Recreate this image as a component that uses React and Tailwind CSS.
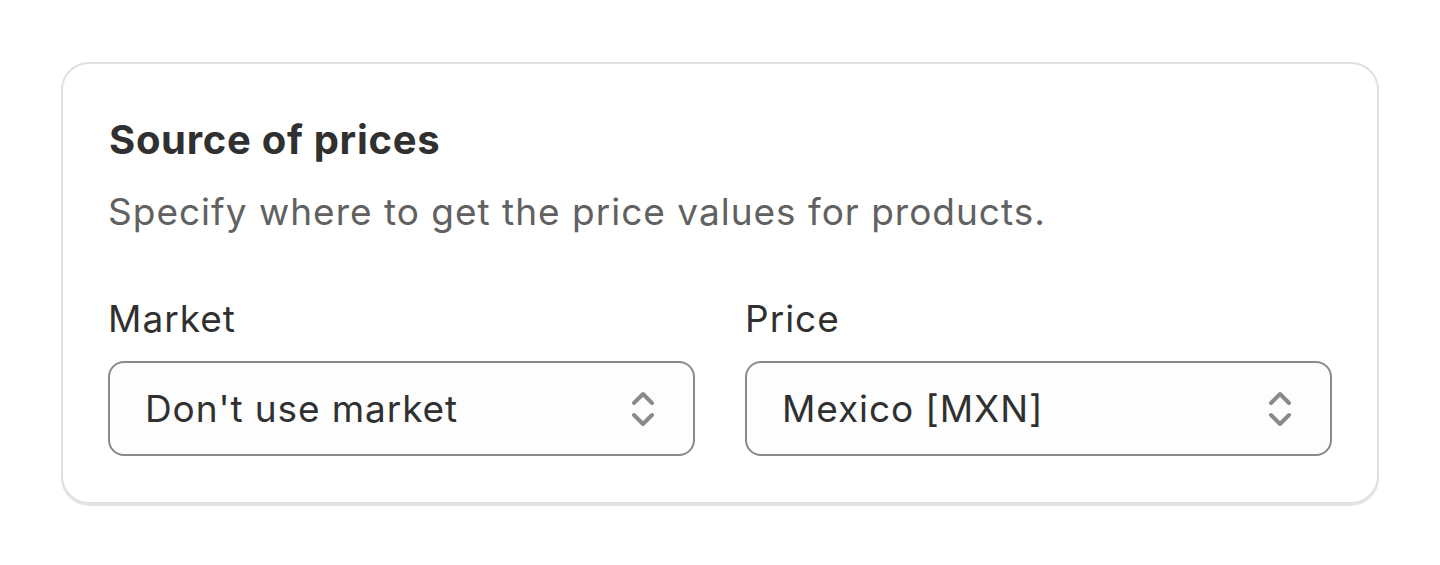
const SelectIcon = () => (
  <svg width="24" height="38" viewBox="0 0 24 38" fill="none" className="shrink-0">
    <path d="M3 13 L12 4 L21 13" stroke="#8a8a8a" strokeWidth="4" strokeLinecap="round" strokeLinejoin="round" />
    <path d="M3 25 L12 34 L21 25" stroke="#8a8a8a" strokeWidth="4" strokeLinecap="round" strokeLinejoin="round" />
  </svg>
)

function Select({ label, value }) {
  return (
    <div className="flex flex-col gap-[18px]">
      <label className="text-[37px] leading-[48px] tracking-[1px] text-[#303030]">{label}</label>
      <div className="flex h-[95px] items-center justify-between rounded-[16px] border-2 border-[#8a8a8a] bg-[#fdfdfd] pl-[35px] pr-[38px]">
        <span className="text-[37px] leading-[48px] tracking-[0.9px] text-[#303030]">{value}</span>
        <SelectIcon />
      </div>
    </div>
  )
}

export default function App() {
  return (
    <div className="min-h-[565px] bg-white px-[61px] pt-[62px] font-['Inter',sans-serif]">
      <div className="rounded-[28px] border-2 border-[#e0e0e0] bg-white px-[45px] pt-[52px] pb-[46px] shadow-[0_2px_0_0_rgba(0,0,0,0.1)]">
        <h2 className="ml-[1px] text-[40px] font-bold leading-[48px] tracking-[0.7px] text-[#303030]">Source of prices</h2>
        <p className="mt-[24px] text-[37px] leading-[48px] tracking-[1px] text-[#616161]">
          Specify where to get the price values for products.
        </p>
        <div className="mt-[59px] grid grid-cols-2 gap-[50px]">
          <Select label="Market" value="Don't use market" />
          <Select label="Price" value="Mexico [MXN]" />
        </div>
      </div>
    </div>
  )
}
